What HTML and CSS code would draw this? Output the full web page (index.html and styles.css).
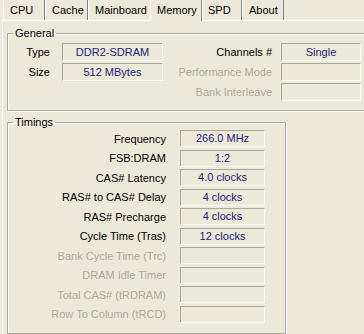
FILE: index.html
```html
<!DOCTYPE html>
<html>
<head>
<meta charset="utf-8">
<link rel="stylesheet" href="styles.css">
</head>
<body>
<div class="tabs">
  <div class="tab t-cpu">CPU</div>
  <div class="tab t-cache">Cache</div>
  <div class="tab t-main">Mainboard</div>
  <div class="tab t-mem active">Memory</div>
  <div class="tab t-spd">SPD</div>
  <div class="tab t-about">About</div>
</div>
<div class="panel">
  <fieldset class="group general">
    <legend>General</legend>
    <div class="gen-body">
      <div class="col-left">
        <div class="row"><span class="lbl">Type</span><span class="val">DDR2-SDRAM</span></div>
        <div class="row"><span class="lbl">Size</span><span class="val">512 MBytes</span></div>
      </div>
      <div class="col-right">
        <div class="row"><span class="lbl">Channels #</span><span class="val">Single</span></div>
        <div class="row"><span class="lbl dis">Performance Mode</span><span class="val"></span></div>
        <div class="row"><span class="lbl dis">Bank Interleave</span><span class="val"></span></div>
      </div>
    </div>
  </fieldset>
  <fieldset class="group timings">
    <legend>Timings</legend>
    <div class="tim-body">
      <div class="row"><span class="lbl">Frequency</span><span class="val">266.0 MHz</span></div>
      <div class="row"><span class="lbl">FSB:DRAM</span><span class="val">1:2</span></div>
      <div class="row"><span class="lbl">CAS# Latency</span><span class="val">4.0 clocks</span></div>
      <div class="row"><span class="lbl">RAS# to CAS# Delay</span><span class="val">4 clocks</span></div>
      <div class="row"><span class="lbl">RAS# Precharge</span><span class="val">4 clocks</span></div>
      <div class="row"><span class="lbl">Cycle Time (Tras)</span><span class="val">12 clocks</span></div>
      <div class="row"><span class="lbl dis">Bank Cycle Time (Trc)</span><span class="val"></span></div>
      <div class="row"><span class="lbl dis">DRAM Idle Timer</span><span class="val"></span></div>
      <div class="row"><span class="lbl dis">Total CAS# (tRDRAM)</span><span class="val"></span></div>
      <div class="row"><span class="lbl dis">Row To Column (tRCD)</span><span class="val"></span></div>
    </div>
  </fieldset>
</div>
</body>
</html>
```
FILE: styles.css
```css
html, body {
  margin: 0;
  padding: 0;
}
body {
  width: 364px;
  height: 334px;
  overflow: hidden;
  background: #ece9d8;
  font-family: "Liberation Sans", Arial, sans-serif;
  font-size: 11px;
  color: #000;
}
.tabs {
  display: flex;
  height: 20px;
  padding-left: 3px;
  position: relative;
  z-index: 1;
}
.tab {
  box-sizing: border-box;
  height: 20px;
  line-height: 20px;
  padding-left: 6px;
  border-left: 1px solid #fff;
  border-right: 1px solid #808080;
  white-space: nowrap;
  color: #000;
}
.t-cpu { width: 42px; }
.t-cache { width: 43px; }
.t-main { width: 62px; border-right: none; }
.t-mem { width: 52px; }
.t-spd { width: 40px; padding-left: 5px; }
.t-about { width: 42px; }
.tab.active {
  height: 21px;
  margin-bottom: -1px;
  background: #ece9d8;
}
.panel {
  box-sizing: border-box;
  margin-left: 2px;
  width: 362px;
  height: 314px;
  border-top: 1px solid #fff;
  border-left: 1px solid #fff;
  padding-left: 4px;
  padding-top: 6px;
}
.group {
  margin: 0;
  padding: 0;
  border: 1px solid #aca899;
  box-shadow: 1px 1px 0 #fff, inset 1px 1px 0 #fff;
  min-width: 0;
}
.group legend {
  margin-left: 5px;
  padding: 0 2px;
  line-height: 12px;
  height: 12px;
}
.general {
  width: 357px;
  box-sizing: border-box;
  border-right: none;
  padding-top: 4px;
  padding-bottom: 9px;
}
.gen-body {
  display: flex;
}
.col-left, .col-right, .tim-body {
  display: flex;
  flex-direction: column;
  gap: 2px;
}
.row {
  display: flex;
  align-items: center;
  height: 18px;
}
.lbl {
  text-align: right;
  white-space: nowrap;
}
.lbl.dis {
  color: #aca899;
}
.val {
  box-sizing: border-box;
  height: 18px;
  line-height: 16px;
  border-top: 1px solid #aca899;
  border-left: 1px solid #aca899;
  border-bottom: 1px solid #fff;
  border-right: 1px solid #fff;
  text-align: center;
  color: #22227e;
  white-space: nowrap;
}
.col-left .lbl { width: 42px; }
.col-left .val { width: 101px; margin-left: 12px; }
.col-right .lbl { width: 109px; }
.col-right .val { width: 80px; margin-left: 9px; }
.timings {
  margin-top: 5px;
  width: 279px;
  box-sizing: border-box;
  padding-top: 2px;
  padding-bottom: 10px;
}
.tim-body {
  gap: 2.5px;
}
.tim-body .row { height: 17px; }
.tim-body .val { height: 17px; line-height: 15px; width: 85px; margin-left: 14px; }
.tim-body .lbl { width: 158px; }
```
